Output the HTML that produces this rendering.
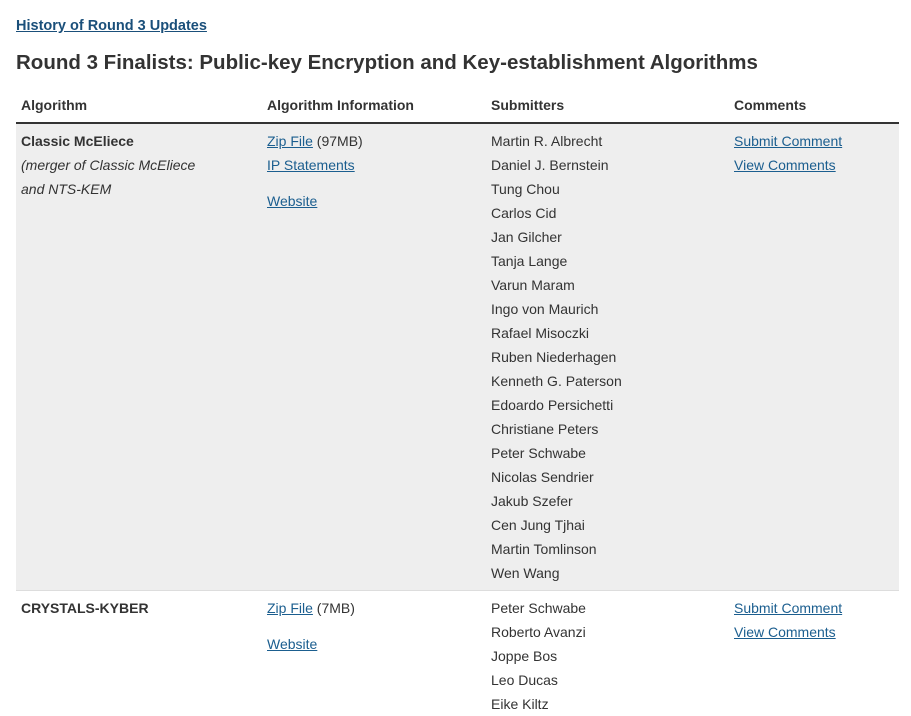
<!DOCTYPE html>
<html><head><meta charset="utf-8"><style>
body{margin:0;background:#fff;width:911px;height:711px;overflow:hidden;font-family:"Liberation Sans",sans-serif;color:#333;font-size:14px;}
a{color:#1b5e8f;text-decoration:underline;}
.a{position:absolute;white-space:nowrap;line-height:24px;}
.b{font-weight:bold;}
</style></head><body>
<a class="a b" style="left:16px;top:14px;font-size:14.5px;color:#1a4f7a">History of Round 3 Updates</a>
<div class="a b" style="left:16px;top:49px;font-size:20.5px;line-height:28px;letter-spacing:0px;color:#333">Round 3 Finalists: Public-key Encryption and Key-establishment Algorithms</div>
<div class="a b" style="left:21px;top:93px">Algorithm</div>
<div class="a b" style="left:267px;top:93px">Algorithm Information</div>
<div class="a b" style="left:491px;top:93px">Submitters</div>
<div class="a b" style="left:734px;top:93px">Comments</div>
<div style="position:absolute;left:16px;top:122px;width:883px;height:2px;background:#333"></div>
<div style="position:absolute;left:16px;top:124px;width:883px;height:466px;background:#eeeeee"></div>
<div style="position:absolute;left:16px;top:590px;width:883px;height:1px;background:#ddd"></div>
<div class="a b" style="left:21px;top:129px">Classic McEliece</div>
<div class="a" style="left:21px;top:153px;font-style:italic">(merger of Classic McEliece<br>and NTS-KEM</div>
<div class="a" style="left:267px;top:129px"><a>Zip File</a> (97MB)<br><a>IP Statements</a></div>
<div class="a" style="left:267px;top:189px"><a>Website</a></div>
<div class="a" style="left:491px;top:129px">Martin R. Albrecht<br>Daniel J. Bernstein<br>Tung Chou<br>Carlos Cid<br>Jan Gilcher<br>Tanja Lange<br>Varun Maram<br>Ingo von Maurich<br>Rafael Misoczki<br>Ruben Niederhagen<br>Kenneth G. Paterson<br>Edoardo Persichetti<br>Christiane Peters<br>Peter Schwabe<br>Nicolas Sendrier<br>Jakub Szefer<br>Cen Jung Tjhai<br>Martin Tomlinson<br>Wen Wang</div>
<div class="a" style="left:734px;top:129px"><a>Submit Comment</a><br><a>View Comments</a></div>
<div class="a b" style="left:21px;top:596px">CRYSTALS-KYBER</div>
<div class="a" style="left:267px;top:596px"><a>Zip File</a> (7MB)</div>
<div class="a" style="left:267px;top:632px"><a>Website</a></div>
<div class="a" style="left:491px;top:596px">Peter Schwabe<br>Roberto Avanzi<br>Joppe Bos<br>Leo Ducas<br>Eike Kiltz</div>
<div class="a" style="left:734px;top:596px"><a>Submit Comment</a><br><a>View Comments</a></div>
</body></html>
